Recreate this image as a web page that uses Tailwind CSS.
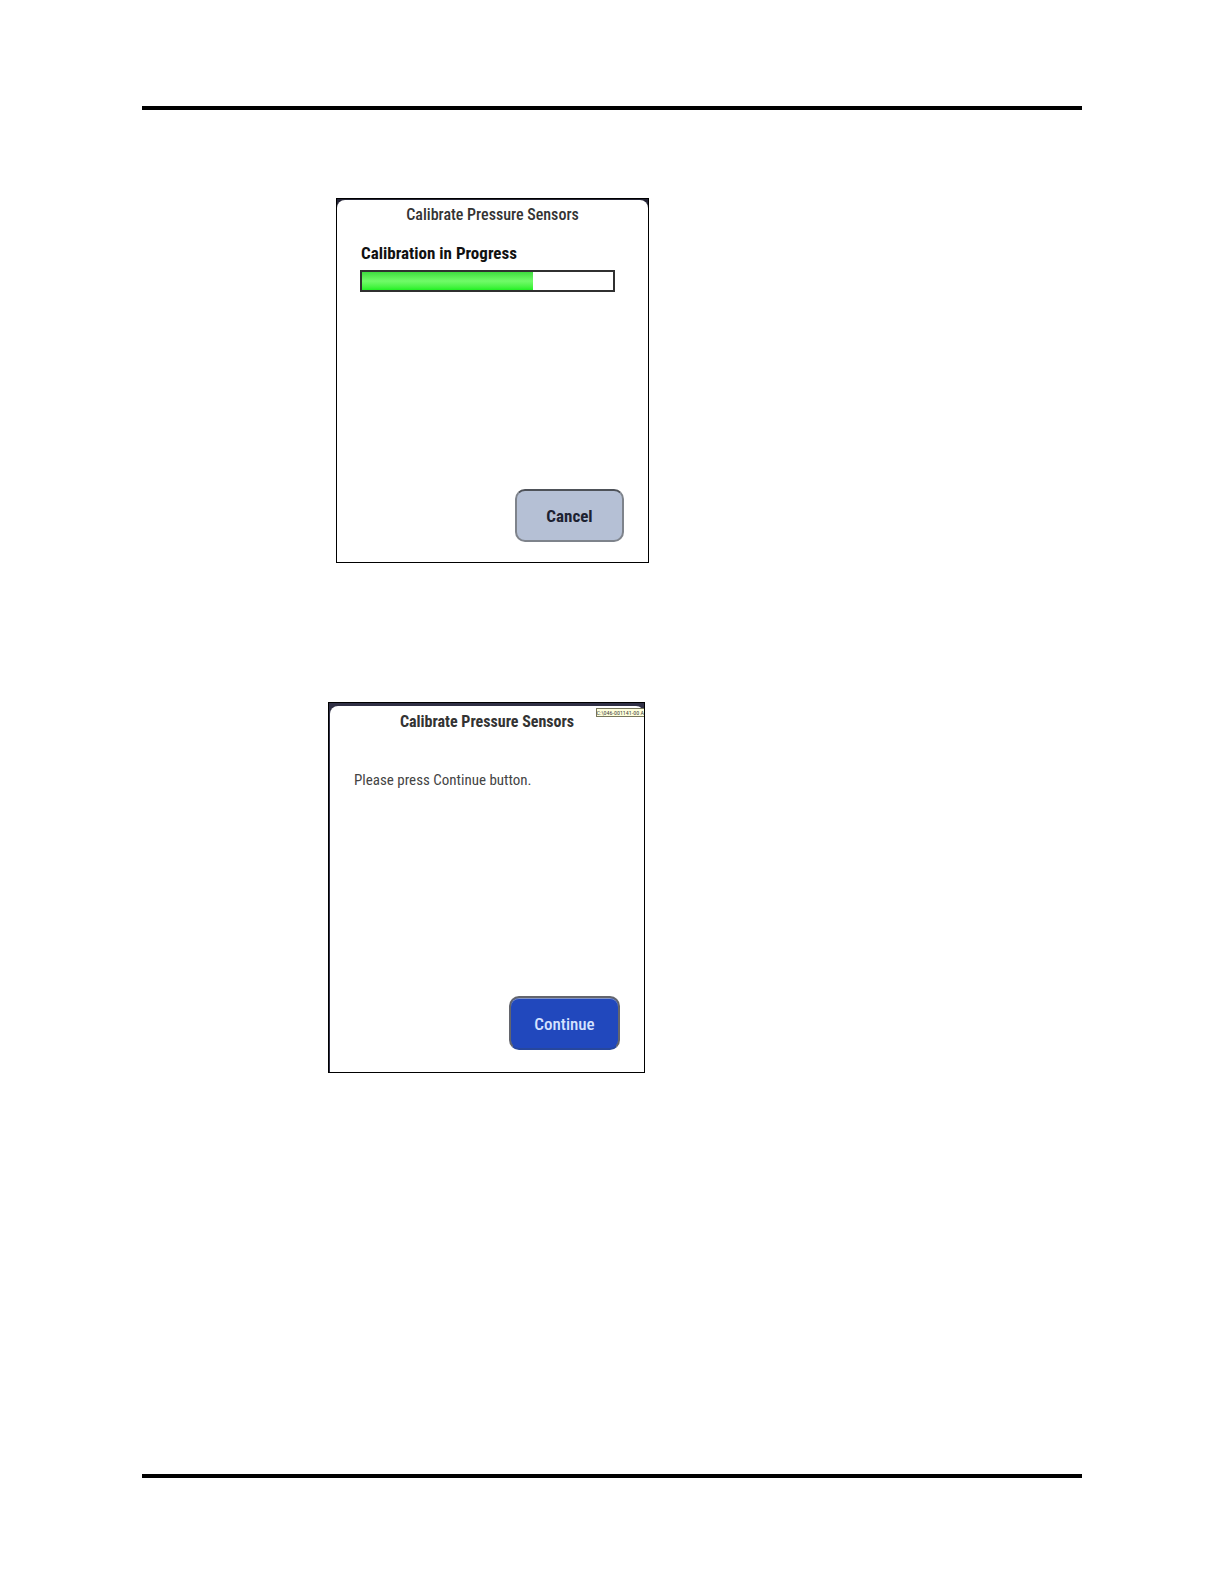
<!DOCTYPE html>
<html lang="en">
  <head>
    <meta charset="UTF-8">
    <meta name="viewport" content="width=device-width, initial-scale=1.0">
    <title>Calibrate Pressure Sensors</title>
    <script src="https://cdn.jsdelivr.net/npm/@tailwindcss/browser@4"></script>
  </head>
  <body class="min-h-screen flex flex-col bg-white px-[142px] py-[106px] font-['Roboto_Condensed','Liberation_Sans',sans-serif]">
    <main class="grow border-y-4 border-black pt-[88px] pb-10">

      <!-- Calibration running -->
      <section class="ml-[194px] w-[313px] min-h-[365px] flex flex-col border border-black bg-[#252536]">
        <div class="grow flex flex-col mt-px px-6 pb-5 rounded-t-lg bg-white">
          <h1 class="mt-[3px] text-center text-base leading-6 font-medium text-[#333]">Calibrate Pressure Sensors</h1>
          <h2 id="progress-label" class="mt-4 text-[17px] leading-5 font-bold text-[#111]">Calibration in Progress</h2>
          <div role="progressbar" aria-labelledby="progress-label" aria-valuenow="68" aria-valuemin="0" aria-valuemax="100" class="mt-[7px] mr-[9px] -ml-px h-[22px] border-2 border-[#303030] bg-white">
            <div class="h-full bg-linear-to-b from-[#3edc3e] via-[#70fb68] to-[#1df020]" style="width: 68%"></div>
          </div>
          <button type="button" class="mt-auto self-end w-[109px] h-[53px] pt-0.5 rounded-[10px] border-2 border-[#7e838b] border-t-[#4e5259] bg-[#b5c0d5] text-[17px] font-bold text-[#1d2232]">Cancel</button>
        </div>
      </section>

      <!-- Waiting for the user to continue -->
      <section class="mt-[139px] ml-[186px] w-[317px] min-h-[371px] flex flex-col relative border border-black bg-[#303045]">
        <div class="grow flex flex-col mt-[3px] ml-px px-6 pb-[22px] rounded-t-lg bg-white">
          <h1 class="mt-1 text-center text-base leading-6 font-bold text-[#333]">Calibrate Pressure Sensors</h1>
          <p class="mt-9 text-[15px] leading-5 text-[#444]">Please press Continue button.</p>
          <button type="button" class="mt-auto self-end w-[111px] h-[54px] pt-1 rounded-[10px] border-2 border-[#63656d] border-b-[#27479d] bg-[#2148bd] shadow-[inset_0_1px_0_#8294c8] text-[17px] font-medium text-[#d5e2ff]">Continue</button>
        </div>
        <span class="absolute top-[5px] right-0 h-[9px] whitespace-nowrap border border-r-0 border-[#77775c] bg-[#ffffdc] text-[6px] leading-[7px] text-[#444]">C:\046-001141-00 A</span>
      </section>

    </main>
  </body>
</html>
